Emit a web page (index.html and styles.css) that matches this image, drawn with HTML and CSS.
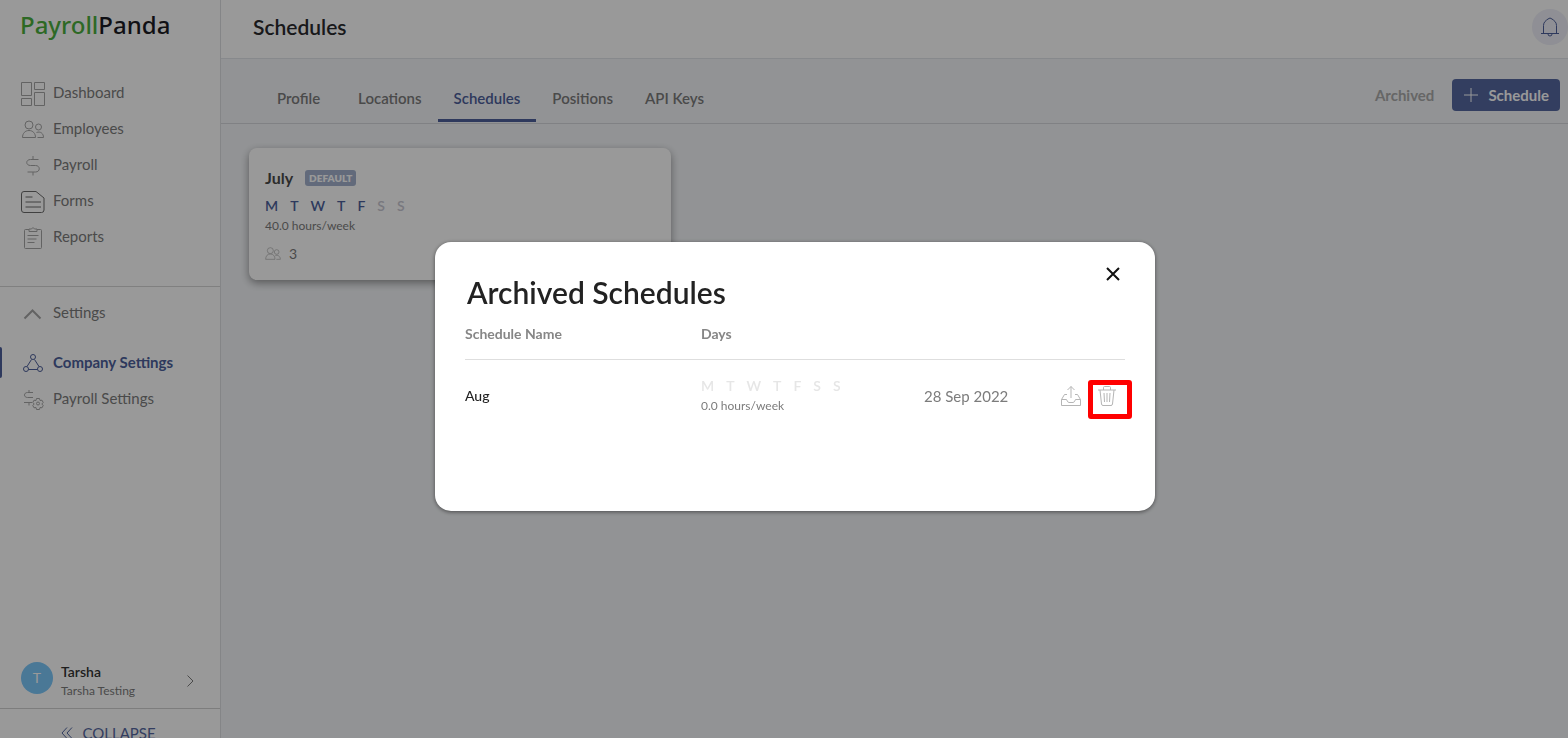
FILE: index.html
```html
<!DOCTYPE html>
<html lang="en">
<head>
<meta charset="utf-8">
<meta name="viewport" content="width=device-width, initial-scale=1">
<title>Schedules - PayrollPanda</title>
<link rel="stylesheet" href="styles.css">
</head>
<body>
<div class="app">
  <aside class="sidebar">
    <a class="logo" href="#"><span class="logo-green">Payroll</span>Panda</a>
    <nav class="nav">
      <a class="nav-item" href="#">
        <svg class="icon" viewBox="0 0 24 24"><path d="M.5.5h10v13H.5zM13.500.5h10v7h-10zM.5 16.500h10v7H.5zM13.500 10.500h10v13h-10z"/></svg>Dashboard</a>
      <a class="nav-item" href="#">
        <svg class="icon" viewBox="0 0 24 24"><circle cx="8" cy="7" r="4"/><path d="M1.500 19.500c0-4 2.500-7 6.500-7s6.500 3 6.500 7z"/><circle cx="17.500" cy="9" r="3"/><path d="M15.500 14.500c4-1.500 7 1 7 5h-6"/></svg>Employees</a>
      <a class="nav-item" href="#">
        <svg class="icon" viewBox="0 0 24 24"><path d="M12 2v3M12 18v3.500M17.500 5.500h-8C4.500 5.500 4.500 11.500 9.500 11.500h5c5 0 5 6.500 0 6.500h-8"/></svg>Payroll</a>
      <a class="nav-item" href="#">
        <svg class="icon icon-dark" viewBox="0 0 24 24"><path d="M3 1.500h12l8 6.500v12q0 2.500-2.500 2.500H3Q.5 22.500.5 20V4Q.5 1.500 3 1.500zM4.500 7h7M4.500 12h15.500M4.500 17h15.500"/></svg>Forms</a>
      <a class="nav-item" href="#">
        <svg class="icon" viewBox="0 0 24 24"><path d="M8 3.500H4.500q-1 0-1 1v17q0 1 1 1h15q1 0 1-1v-17q0-1-1-1H16M8 3v2.500h8V3h-2.500q-1.500-3-3 0zM6.500 9.500h11M6.500 13h9M6.500 16.500h7"/></svg>Reports</a>
    </nav>
    <nav class="nav nav-settings">
      <a class="nav-item nav-toggle" href="#">
        <svg class="icon icon-bold" viewBox="0 0 24 24"><path d="M3.500 16.500l8-8 8 8"/></svg>Settings</a>
      <a class="nav-item active" href="#">
        <svg class="icon" viewBox="0 0 24 24"><circle cx="12" cy="5" r="2.500"/><circle cx="5" cy="17" r="2.500"/><circle cx="19" cy="17" r="2.500"/><path d="M10.500 7.500l-4.500 7M13.500 7.500l4.500 7M7.500 17.500h9"/></svg>Company Settings</a>
      <a class="nav-item" href="#">
        <svg class="icon" viewBox="0 0 24 24"><path d="M8 2v3M8 14v3.500M12 4.500H6.500c-4 0-4 5 0 5H12M3 14.500h8"/><circle cx="17" cy="15.500" r="1.500"/><path d="M15.500 10.500h3l.5 2 2-.3 1.200 2.300-1.400 1.500 1.400 1.500-1.200 2.300-2-.3-.5 2h-3l-.5-2-2 .3-1.200-2.300 1.400-1.500-1.400-1.500L13 12.200l2 .3z"/></svg>Payroll Settings</a>
    </nav>
    <a class="account" href="#">
      <span class="avatar">T</span>
      <span class="account-text"><span class="account-name">Tarsha</span><span class="account-org">Tarsha Testing</span></span>
      <svg class="account-arrow" viewBox="0 0 12 12"><path d="M3.500.5L9 6l-5.500 5.500"/></svg>
    </a>
    <button class="collapse" type="button">
      <svg class="collapse-icon" viewBox="0 0 12 12"><path d="M6 .5L1 6l5 5.500M11 .5L6 6l5 5.500"/></svg>COLLAPSE</button>
  </aside>

  <div class="page">
    <header class="topbar">
      <h1 class="page-title">Schedules</h1>
      <button class="bell" type="button" aria-label="Notifications">
        <svg class="bell-icon" viewBox="0 0 20 20"><path d="M1 16.500h18M3.500 16.500V8.500C3.500 5 6 3.500 8 2q2-2 4 0c2 1.500 4.500 3 4.500 6.500v8M8 17q0 2 2 2t2-2"/></svg>
      </button>
    </header>
    <div class="toolbar">
      <nav class="tabs">
        <a class="tab" href="#">Profile</a>
        <a class="tab" href="#">Locations</a>
        <a class="tab tab-active" href="#">Schedules</a>
        <a class="tab" href="#">Positions</a>
        <a class="tab" href="#">API Keys</a>
      </nav>
      <a class="archived-link" href="#">Archived</a>
      <button class="add" type="button">
        <svg class="add-icon" viewBox="0 0 14 14"><path d="M7 0v14M0 7h14"/></svg>Schedule</button>
    </div>
    <main class="content">
      <article class="card">
        <div class="card-head"><h2 class="card-title">July</h2><span class="badge">DEFAULT</span></div>
        <div class="days"><span>M</span><span>T</span><span>W</span><span>T</span><span>F</span><span class="off">S</span><span class="off">S</span></div>
        <div class="hours">40.0 hours/week</div>
        <div class="members">
          <svg class="members-icon" viewBox="0 0 24 24"><circle cx="8" cy="7" r="4.500"/><path d="M1 20c0-5 2.500-8 7-8s7 3 7 8z"/><circle cx="17.500" cy="9" r="3.500"/><path d="M15.500 14.500c4-1.500 7.500 1 7.500 5.500h-6"/></svg>3</div>
      </article>
    </main>
  </div>
</div>

<div class="overlay">
  <section class="modal" role="dialog" aria-modal="true" aria-labelledby="modal-title">
    <button class="close" type="button" aria-label="Close">
      <svg class="close-icon" viewBox="0 0 14 14"><path d="M1 1l12 12M13 1L1 13"/></svg>
    </button>
    <h2 class="modal-title" id="modal-title">Archived Schedules</h2>
    <table class="table">
      <thead><tr><th class="col-name">Schedule Name</th><th class="col-days">Days</th><th class="col-date"></th><th></th></tr></thead>
      <tbody><tr>
        <td class="name">Aug</td>
        <td><div class="days days-off"><span>M</span><span>T</span><span>W</span><span>T</span><span>F</span><span>S</span><span>S</span></div><div class="hours">0.0 hours/week</div></td>
        <td class="date">28 Sep 2022</td>
        <td><div class="actions">
          <button class="action" type="button" aria-label="Restore">
            <svg class="action-icon" viewBox="0 0 20 20"><path d="M10 12V.5M6.500 4L10 .5 13.500 4M6 8.500H3.500L.5 13.500v6h19v-6l-3-5H14M.5 13.500h5q1 3 2.500 3h4q1.500 0 2.500-3h5"/></svg></button>
          <button class="action marked" type="button" aria-label="Delete">
            <svg class="action-icon" viewBox="0 0 20 20"><path d="M1 4h18M6.500 4V1.500q0-1 1-1h5q1 0 1 1V4M3 4l1.500 14q.2 1.500 1.500 1.500h8q1.300 0 1.500-1.500L17 4M7 7l.5 9M10 7v9M13 7l-.5 9"/></svg></button>
        </div></td>
      </tr></tbody>
    </table>
  </section>
</div>
</body>
</html>
```
FILE: styles.css
```css
*, *::before, *::after { box-sizing: border-box; }

body {
  margin: 0;
  overflow: hidden;
  font: 14px/20px Lato, "Open Sans", sans-serif;
  color: #7c7c7c;
}

a { color: inherit; text-decoration: none; }
button { font: inherit; border: 0; background: none; padding: 0; cursor: pointer; }
h1, h2 { margin: 0; }
svg { display: block; flex: none; fill: none; stroke: currentColor; }

.app { display: flex; height: 100vh; }

/* Sidebar */
.sidebar {
  display: flex;
  flex-direction: column;
  flex: 0 0 221px;
  background: #fff;
  border-right: 1px solid #dcdee2;
}
.logo {
  padding: 9px 20px;
  font: 500 24px/32px "Noto Sans", sans-serif;
  color: #1c1c24;
}
.logo-green { color: #4caf3f; }
.nav { padding: 24px 0 32px; }
.nav-item {
  display: flex;
  align-items: center;
  gap: 8px;
  height: 36px;
  padding-left: 21px;
  font-size: 15px;
}
.icon { width: 24px; height: 24px; color: #a6a6a6; margin-top: 3px; }
.icon-dark { color: #6c6c6c; }
.icon-bold { stroke-width: 2; }
.nav-settings { flex: 1; border-top: 1px solid #d6d6d6; padding: 7px 0 0; }
.nav-toggle { margin-bottom: 14px; }
.active {
  position: relative;
  font-weight: 700;
  color: #4d5f9b;
}
.active .icon { color: inherit; }
.active::before {
  content: "";
  position: absolute;
  left: 0;
  width: 2px;
  height: 31px;
  border-radius: 0 2px 2px 0;
  background: #4d5f9b;
}
.account {
  display: flex;
  align-items: center;
  gap: 8px;
  padding: 0 24px 8px 21px;
}
.avatar {
  width: 32px;
  height: 32px;
  margin-bottom: 6px;
  border-radius: 50%;
  background: #7cc8fb;
  color: #fff;
  line-height: 32px;
  text-align: center;
}
.account-text { flex: 1; display: grid; }
.account-name { font-weight: 600; color: #333; }
.account-org { font-size: 12px; line-height: 18px; }
.account-arrow { width: 12px; height: 12px; }
.collapse {
  display: flex;
  justify-content: center;
  gap: 9px;
  height: 30px;
  padding: 14px 3px 0 0;
  border-top: 1px solid #d0d0d0;
  font-size: 15px;
  line-height: 20px;
  color: #5568a1;
}
.collapse-icon { width: 12px; height: 12px; margin-top: 4px; }

/* Page */
.page { flex: 1; min-width: 0; background: #f4f6f9; }
.topbar {
  display: flex;
  align-items: center;
  justify-content: space-between;
  height: 59px;
  padding: 0 0 5px 32px;
  background: #fff;
  border-bottom: 1px solid #e2e4e9;
}
.page-title { font-size: 21px; font-weight: 600; line-height: 28px; color: #2a2a2e; }
.bell {
  display: grid;
  place-items: center;
  width: 36px;
  height: 36px;
  border-radius: 50%;
  background: #eeeff8;
  color: #4d5f9b;
}
.bell-icon { width: 20px; height: 20px; }
.toolbar {
  display: flex;
  align-items: center;
  height: 65px;
  padding: 0 8px 0 40px;
  border-bottom: 1px solid #d5d8dd;
}
.tabs { display: flex; align-self: flex-end; flex: 1; padding-bottom: 1px; }
.tab {
  padding: 14px 16px 11px;
  border-bottom: 3px solid transparent;
  font-size: 15px;
  font-weight: 600;
}
.tab:first-child { margin-right: 6px; }
.tab-active { color: #4d5f9b; border-color: #4d5f9b; }
.archived-link { margin: 8px 18px 0 0; font-size: 15px; font-weight: 700; color: #ababab; }
.add {
  display: flex;
  align-items: center;
  gap: 10px;
  height: 32px;
  margin-top: 8px;
  padding: 0 11px 0 12px;
  border-radius: 4px;
  background: #5568a1;
  color: #fff;
  font-size: 15px;
  font-weight: 700;
}
.add-icon { width: 14px; height: 14px; }
.content { padding: 24px 28px; }
.card {
  width: 422px;
  max-width: 100%;
  padding: 20px 16px 16px;
  border-radius: 8px;
  background: #fff;
  box-shadow: 0 3px 8px rgba(0, 0, 0, .4);
}
.card-head { display: flex; align-items: center; gap: 12px; }
.card-title { font-size: 16px; line-height: 20px; color: #4a4a4a; }
.badge {
  padding: 0 4px;
  border-radius: 3px;
  background: #a3b1cd;
  color: #fff;
  font-size: 10px;
  font-weight: 800;
  line-height: 16px;
}
.days {
  display: flex;
  gap: 12px;
  margin-top: 8px;
  font-weight: 600;
  color: #4d5f9b;
}
.off { color: #c9c9d3; }
.hours { font-size: 12px; line-height: 20px; }
.members {
  display: flex;
  align-items: center;
  gap: 8px;
  margin-top: 8px;
}
.members-icon { width: 16px; height: 16px; color: #ababab; }

/* Modal */
.overlay {
  position: fixed;
  inset: 0;
  display: grid;
  place-items: center;
  padding: 15px 0 0 22px;
  background: rgba(0, 0, 0, .4);
}
.modal {
  position: relative;
  width: 720px;
  max-width: 100%;
  padding: 32px 30px 95px;
  border-radius: 16px;
  background: #fff;
  box-shadow: 0 1px 4px rgba(0, 0, 0, .5);
}
.close { position: absolute; top: 25px; right: 35px; color: #111; }
.close-icon { width: 14px; height: 14px; stroke-width: 2; }
.modal-title { padding-left: 2px; font-size: 30px; font-weight: 600; line-height: 36px; color: #222; }
.table { width: 100%; margin-top: 10px; border-collapse: collapse; table-layout: fixed; }
th {
  padding: 4px 0 15px;
  border-bottom: 1px solid #dedede;
  text-align: left;
  font-weight: 700;
  color: #868686;
}
td { padding: 16px 0 0; }
.col-name { width: 236px; }
.col-days { width: 223px; }
.col-date { width: 137px; }
.name { font-weight: 500; color: #222; }
.date { font-size: 15px; }
.table .days { margin: 0; }
.table .days-off { color: #e6e6e6; }
.actions { display: flex; gap: 16px; }
.action { position: relative; color: #b5b5b5; }
.action-icon { width: 20px; height: 20px; }
.marked::after {
  content: "";
  position: absolute;
  top: -6px;
  left: -9px;
  width: 44px;
  height: 39px;
  border: 5px solid #f00;
  border-radius: 3px;
}
```
